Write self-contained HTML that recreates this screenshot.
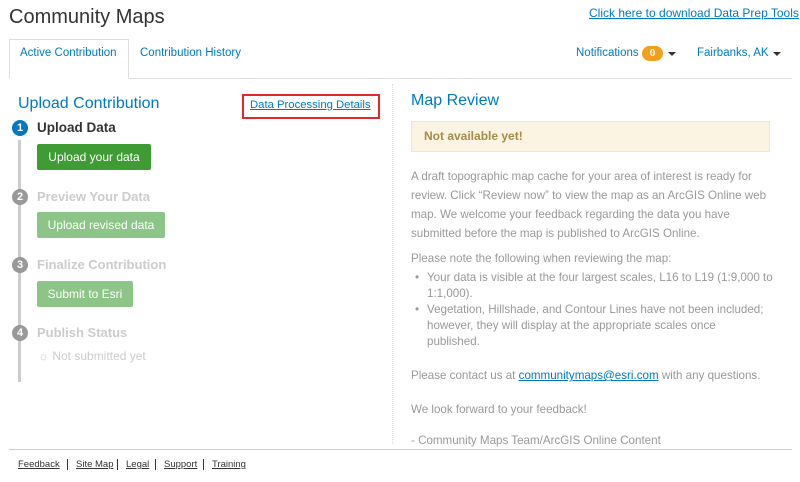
<!DOCTYPE html>
<html><head><style>
*{box-sizing:border-box;margin:0;padding:0}
body{width:800px;height:482px;background:#fff;font-family:"Liberation Sans",sans-serif;position:relative;overflow:hidden;color:#333}
.a{position:absolute;white-space:nowrap}
a{color:#0079c1}
.btn{position:absolute;color:#fff;font-size:12px;text-align:center;border-radius:2px;line-height:26px;height:26px}
.num{position:absolute;width:16px;height:16px;border-radius:50%;color:#fff;font-size:11px;font-weight:bold;text-align:center;line-height:16px;left:12px}
.step{position:absolute;left:37px;font-size:13px;font-weight:bold;color:#ccc;white-space:nowrap}
.p{position:absolute;left:411px;font-size:11.6px;color:#999;line-height:19px;width:362px}
ul{list-style:none}
li{position:relative;padding-left:16px;line-height:16px}
li:before{content:"•";position:absolute;left:4px}
.f{position:absolute;top:459px;font-size:9.5px;text-decoration:underline;color:#333;line-height:12px}
.s{position:absolute;top:459px;height:11px;border-left:1px solid #333}
</style></head><body>
<div class="a" style="left:9px;top:6px;font-size:20px;color:#333">Community Maps</div>
<a class="a" style="left:589px;top:6px;font-size:12px;text-decoration:underline">Click here to download Data Prep Tools</a>
<div class="a" style="left:9px;top:78px;width:783px;border-top:1px solid #ddd"></div>
<div class="a" style="left:9px;top:39px;width:120px;height:40px;border:1px solid #ddd;border-bottom:1px solid #fff;background:#fff"></div>
<div class="a" style="left:20px;top:47px;font-size:11.5px;color:#0079c1">Active Contribution</div>
<div class="a" style="left:140px;top:47px;font-size:11.5px;color:#0079c1">Contribution History</div>
<div class="a" style="left:576px;top:47px;font-size:11.5px;color:#0079c1">Notifications</div>
<div class="a" style="left:642px;top:46px;width:21px;height:15px;border-radius:8px;background:#f0a01c;color:#fff;font-size:10px;font-weight:bold;text-align:center;line-height:15px">0</div>
<div class="a" style="left:668px;top:52px;border:4px solid transparent;border-top-color:#333;border-bottom:0"></div>
<div class="a" style="left:697px;top:47px;font-size:11.5px;color:#0079c1">Fairbanks, AK</div>
<div class="a" style="left:773px;top:52px;border:4px solid transparent;border-top-color:#333;border-bottom:0"></div>
<div class="a" style="left:392px;top:84px;height:360px;border-left:1px dotted #ddd"></div>
<div class="a" style="left:18px;top:95px;font-size:16px;color:#0079c1">Upload Contribution</div>
<div class="a" style="left:242px;top:94px;width:138px;height:25px;border:2px solid #e0282e"></div>
<a class="a" style="left:250px;top:99px;font-size:11.3px;text-decoration:underline">Data Processing Details</a>
<div class="a" style="left:18px;top:140px;width:3px;height:242px;background:#ccc"></div>
<div class="num" style="top:120px;background:#0079c1">1</div>
<div class="step" style="top:120px;color:#333;font-size:13.5px">Upload Data</div>
<div class="btn" style="left:37px;top:144px;width:114px;background:#3f9c35">Upload your data</div>
<div class="num" style="top:189px;background:#999">2</div>
<div class="step" style="top:189px">Preview Your Data</div>
<div class="btn" style="left:37px;top:212px;width:128px;background:#8dc487">Upload revised data</div>
<div class="num" style="top:257px;background:#999">3</div>
<div class="step" style="top:257px">Finalize Contribution</div>
<div class="btn" style="left:37px;top:281px;width:96px;background:#8dc487">Submit to Esri</div>
<div class="num" style="top:325px;background:#999">4</div>
<div class="step" style="top:325px">Publish Status</div>
<div class="a" style="left:38px;top:349px;font-size:12px;color:#ccc">☼ Not submitted yet</div>
<div class="a" style="left:411px;top:92px;font-size:16px;color:#0079c1">Map Review</div>
<div class="a" style="left:411px;top:121px;width:359px;height:31px;background:#fcf4e2;border:1px solid #f5e6c4"></div>
<div class="a" style="left:424px;top:129px;font-size:12px;font-weight:bold;color:#a58c4a">Not available yet!</div>
<div class="p" style="top:167px">A draft topographic map cache for your area of interest is ready for review. Click “Review now” to view the map as an ArcGIS Online web map. We welcome your feedback regarding the data you have submitted before the map is published to ArcGIS Online.</div>
<div class="p" style="top:249px">Please note the following when reviewing the map:</div>
<ul class="p" style="top:270px;width:362px"><li>Your data is visible at the four largest scales, L16 to L19 (1:9,000 to 1:1,000).</li><li>Vegetation, Hillshade, and Contour Lines have not been included; however, they will display at the appropriate scales once<br>published.</li></ul>
<div class="p" style="top:366px;width:380px">Please contact us at <a style="text-decoration:underline">communitymaps@esri.com</a> with any questions.</div>
<div class="p" style="top:400px">We look forward to your feedback!</div>
<div class="p" style="top:431px">- Community Maps Team/ArcGIS Online Content</div>
<div class="a" style="left:9px;top:449px;width:783px;border-top:1px solid #ccc"></div>
<div class="f" style="left:18px">Feedback</div><div class="s" style="left:67px"></div>
<div class="f" style="left:76px">Site Map</div><div class="s" style="left:117px"></div>
<div class="f" style="left:126px">Legal</div><div class="s" style="left:155px"></div>
<div class="f" style="left:164px">Support</div><div class="s" style="left:203px"></div>
<div class="f" style="left:212px">Training</div>
</body></html>
